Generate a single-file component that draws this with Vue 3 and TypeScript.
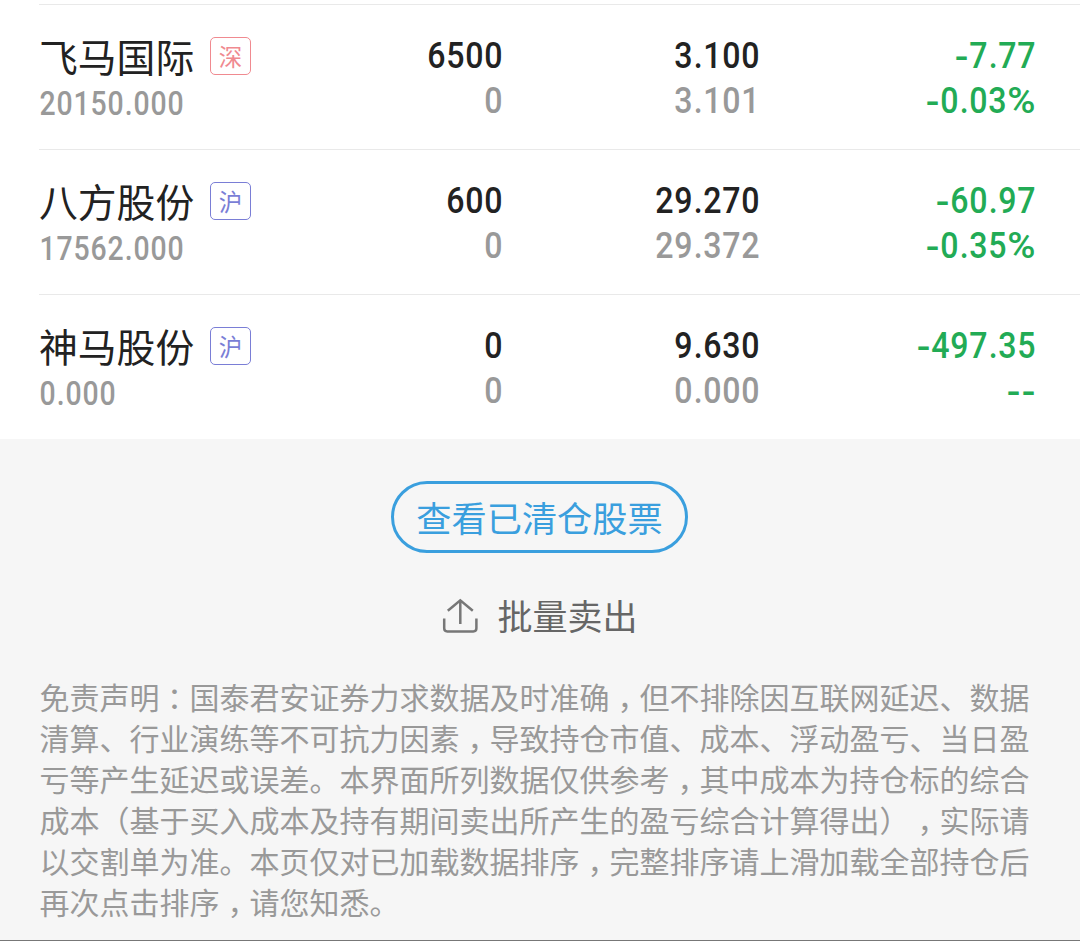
<script setup lang="ts">
interface Holding {
  name: string
  market: string
  kind: 'sz' | 'sh'
  value: string
  amount: string
  available: string
  price: string
  cost: string
  profit: string
  rate: string
}

const holdings: Holding[] = [
  { name: '飞马国际', market: '深', kind: 'sz', value: '20150.000', amount: '6500', available: '0', price: '3.100', cost: '3.101', profit: '-7.77', rate: '-0.03%' },
  { name: '八方股份', market: '沪', kind: 'sh', value: '17562.000', amount: '600', available: '0', price: '29.270', cost: '29.372', profit: '-60.97', rate: '-0.35%' },
  { name: '神马股份', market: '沪', kind: 'sh', value: '0.000', amount: '0', available: '0', price: '9.630', cost: '0.000', profit: '-497.35', rate: '--' },
]

const disclaimer: string[] = [
  '免责声明：国泰君安证券力求数据及时准确，但不排除因互联网延迟、数据',
  '清算、行业演练等不可抗力因素，导致持仓市值、成本、浮动盈亏、当日盈',
  '亏等产生延迟或误差。本界面所列数据仅供参考，其中成本为持仓标的综合',
  '成本（基于买入成本及持有期间卖出所产生的盈亏综合计算得出），实际请',
  '以交割单为准。本页仅对已加载数据排序，完整排序请上滑加载全部持仓后',
  '再次点击排序，请您知悉。',
]

const pieces = (line: string): string[] => line.split(/([：，])/).filter(Boolean)
const markClass = (s: string): string => (s === '：' ? 'colon' : s === '，' ? 'comma' : '')
const chars = (s: string): string[] => s.split('')
const charClass = (c: string): string =>
  c === '.' ? 'dot' : c === '-' ? 'dash' : c === '%' ? 'pct' : 'digit'
</script>

<template>
  <main class="page">
    <section class="list">
      <article v-for="h in holdings" :key="h.name" class="row">
        <div class="stock">
          <div class="title">
            <span class="name">{{ h.name }}</span>
            <span class="tag" :class="h.kind">{{ h.market }}</span>
          </div>
          <div class="num small"><span v-for="(c, i) in chars(h.value)" :key="i" :class="charClass(c)">{{ c }}</span></div>
        </div>
        <div class="pair amount">
          <div class="num"><span v-for="(c, i) in chars(h.amount)" :key="i" :class="charClass(c)">{{ c }}</span></div>
          <div class="num sub"><span v-for="(c, i) in chars(h.available)" :key="i" :class="charClass(c)">{{ c }}</span></div>
        </div>
        <div class="pair price">
          <div class="num"><span v-for="(c, i) in chars(h.price)" :key="i" :class="charClass(c)">{{ c }}</span></div>
          <div class="num sub"><span v-for="(c, i) in chars(h.cost)" :key="i" :class="charClass(c)">{{ c }}</span></div>
        </div>
        <div class="pair profit">
          <div class="num"><span v-for="(c, i) in chars(h.profit)" :key="i" :class="charClass(c)">{{ c }}</span></div>
          <div class="num"><span v-for="(c, i) in chars(h.rate)" :key="i" :class="charClass(c)">{{ c }}</span></div>
        </div>
      </article>
    </section>

    <section class="footer">
      <button class="cleared" type="button">查看已清仓股票</button>
      <div class="batch">
        <svg class="icon" width="36" height="36" viewBox="0 0 36 36" fill="none" stroke="#777" stroke-width="2.5">
          <path d="M18.3 26V2.3M5.8 12.8L18.3 2.3L30.8 12.8" />
          <path d="M2.2 20.5V30.3Q2.2 33.4 5.3 33.4H31.3Q34.4 33.4 34.4 30.3V20.5" />
        </svg>
        <span class="batch-text">批量卖出</span>
      </div>
      <div class="notice">
        <div v-for="(line, i) in disclaimer" :key="i" class="line"><span v-for="(p, j) in pieces(line)" :key="j" :class="markClass(p)">{{ p }}</span></div>
      </div>
    </section>
  </main>
</template>

<style>
body {
  margin: 0;
  background: #f6f6f6;
}
</style>

<style scoped>
.page {
  box-sizing: border-box;
  width: 1080px;
  height: 941px;
  overflow: hidden;
  background: #f6f6f6;
  border-bottom: 1px solid #777;
  font-family: "Liberation Sans", "Noto Sans CJK SC", sans-serif;
}
.list {
  box-sizing: border-box;
  height: 439px;
  padding: 4px 0 0 39px;
  background: #fff;
}
.row {
  box-sizing: border-box;
  display: grid;
  grid-template-columns: 264px 200px 257px 276px;
  height: 145px;
  border-top: 1px solid #e9e9e9;
}
.title {
  display: flex;
  align-items: center;
  height: 38px;
  margin-top: 32px;
}
.name {
  font: 400 38.8px/38px "Noto Sans CJK SC", sans-serif;
  color: #222;
  width: 171px;
  margin-top: -2px;
  white-space: nowrap;
}
.tag {
  box-sizing: border-box;
  width: 41px;
  height: 38px;
  border: 1px solid;
  border-radius: 5px;
  font: 400 23.5px/36px "Noto Sans CJK SC", sans-serif;
  text-align: center;
}
.sz {
  color: #f08a90;
}
.sh {
  color: #7a7ed6;
}
.num {
  display: flex;
  height: 45px;
  font: 500 36.5px/44px Roboto, sans-serif;
  white-space: nowrap;
}
.num span {
  display: flex;
  justify-content: center;
  width: 19px;
  transform: scaleX(0.88);
}
.num .dot {
  width: 10.5px;
}
.num .dash {
  width: 15px;
  transform: translateY(2px) scaleX(1.1);
}
.num .pct {
  width: 29px;
  transform: scaleX(1.05);
}
.num.small {
  height: 36px;
  margin-top: 11px;
  font-size: 32.3px;
  line-height: 36px;
}
.num.small span {
  width: 16.95px;
}
.num.small .dot {
  width: 9.3px;
}
.pair {
  padding-top: 29px;
}
.pair .num {
  justify-content: flex-end;
}
.num.small {
  color: #999;
}
.profit {
  color: #22ab55;
}
.amount .num,
.price .num {
  color: #222;
}
.pair .num.sub {
  color: #999;
}
.footer {
  display: flex;
  flex-direction: column;
  align-items: center;
}
.cleared {
  box-sizing: border-box;
  width: 297px;
  height: 72px;
  margin: 42px 1px 0 0;
  padding: 0;
  border: 3px solid #3a9fde;
  border-radius: 36px;
  background: transparent;
  color: #3a9fde;
  font: 400 35.2px/66px "Noto Sans CJK SC", sans-serif;
}
.batch {
  display: flex;
  align-items: center;
  gap: 19px;
  height: 50px;
  margin-top: 38px;
  color: #666;
  font: 400 35px/50px "Noto Sans CJK SC", sans-serif;
}
.batch-text {
  margin-top: -2px;
}
.notice {
  width: 1001px;
  margin-top: 35px;
  color: #999;
  font: 400 30px/41px "Noto Sans CJK SC", sans-serif;
  text-spacing-trim: space-all;
}
.line {
  height: 41px;
  white-space: nowrap;
}
.colon {
  display: inline-block;
  height: 41px;
  vertical-align: top;
  font-family: "Noto Sans CJK TC", sans-serif;
  transform: translateY(1px);
}
.comma {
  padding: 0 7px 0 8px;
  font-feature-settings: "halt";
}
</style>
